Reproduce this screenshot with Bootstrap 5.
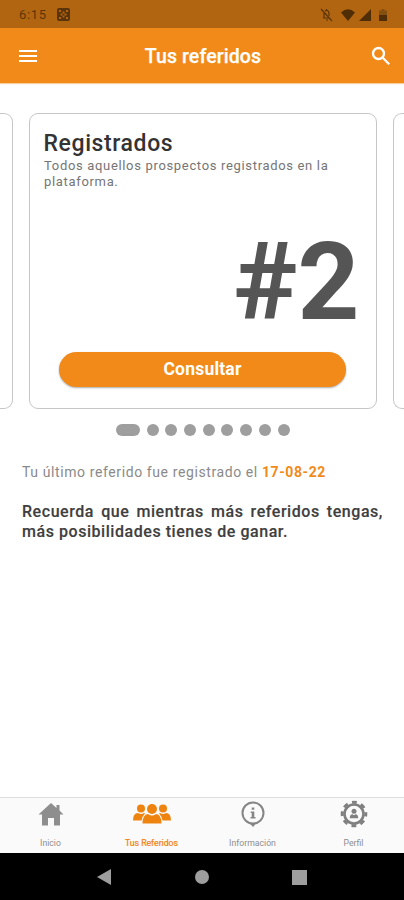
<!DOCTYPE html>
<html lang="es">
<head>
<meta charset="utf-8">
<meta name="viewport" content="width=device-width, initial-scale=1">
<title>Tus referidos</title>
<link href="https://cdn.jsdelivr.net/npm/bootstrap@5.3.0/dist/css/bootstrap.min.css" rel="stylesheet">
<style>
body{font-family:Roboto,"Liberation Sans",sans-serif;background:#fff;color:#3c3c3c;width:404px;height:900px}
svg{display:block;flex:none}
.status{height:28px;background:#b26510;color:#5b3509;font-size:13px;letter-spacing:.65px;padding:2px 17px 0 19px}
.appbar{height:55px;background:#f28a1a;padding:0 13px 0 19px;box-shadow:0 1px 1px #f9cfa0}
.appbar h1{font-size:19.5px;font-weight:500;-webkit-text-stroke:.25px #fff;letter-spacing:.1px;padding:3px 2px 0 0}
.slides{gap:16px;margin-top:30px;margin-left:-.5px}
.slide{flex:none;width:348px;height:296px;border:1.5px solid #c6c6c6;border-radius:9px}
.slide.prev{width:13px;border-left:0;border-radius:0 9px 9px 0}
.slide.next{width:12px;border-right:0;border-radius:9px 0 0 9px}
.slide-body{padding:17px 14px 21px}
.slide h2{font-size:23px;line-height:26px;font-weight:500;color:#333;letter-spacing:.6px}
.desc{font-size:13px;line-height:16px;color:#757575;letter-spacing:.67px;white-space:nowrap;padding:1px 0 0 .5px}
.rank{font-size:108px;line-height:108px;font-weight:700;color:#555;margin:38px 2px 0 0}
.cta{height:35px;width:287px;background:#f28a1a;color:#fff;font-size:17.5px;font-weight:700;line-height:35px;letter-spacing:.2px;box-shadow:0 1px 2px #0005}
.dots{gap:6.7px;margin:15px 0 0 116px;height:12px}
.dots span{width:12px;height:12px;border-radius:6px;background:#9e9e9e;flex:none}
.dots .on{width:24px}
.info{padding:0 21px 0 22px}
.last{font-size:14px;line-height:20px;color:#8a8a8a;letter-spacing:.6px;margin-top:26px}
.last b{color:#f28a1a;font-weight:700}
.note{font-size:16px;line-height:20px;font-weight:500;color:#3f3f3f;margin-top:20px;letter-spacing:.55px;text-align:justify;-webkit-text-stroke:.15px #3f3f3f}
.tabs{height:56px;background:#fafafa;border-top:1px solid #dedede;color:#8e8e8e;font-size:8.7px;line-height:10px}
.tabs .item{width:101px;padding-top:2px}
.tabs .item span{margin-top:10px}
.tabs .on{color:#ee830f}
.tabs .on span{-webkit-text-stroke:.2px #ee830f}
.sys{height:47px;background:#000;padding:1px 97px 0}
</style>
<script src="https://cdn.jsdelivr.net/npm/bootstrap@5.3.0/dist/js/bootstrap.bundle.min.js"></script>
</head>
<body class="d-flex flex-column overflow-hidden">
<div class="status d-flex align-items-center">
  <span>6:15</span>
  <svg class="ms-2" width="16" height="14" viewBox="0 0 16 14"><rect x="2" y="0" width="13" height="13" rx="2" fill="#5b3509"/><path d="M4 2h2v2H4zM11 2h2v2h-2zM7.500 3.500h2v2h-2zM5.500 5.500h2v2h-2zM9.500 5.500h2v2h-2zM7.500 7.500h2v2h-2zM4 9h2v2H4zM11 9h2v2h-2z" fill="#b26510"/></svg>
  <svg class="ms-auto" width="13" height="14" viewBox="0 0 13 14" fill="none" stroke="#5b3509" stroke-width="1.200"><path d="M1 1l11 12M3 10h7M4 10V5M5 3q3-2 4 2v3M6 12h2M6.500 1v2M6 6l3 4"/></svg>
  <svg class="ms-2" width="14" height="12" viewBox="0 0 14 12"><path d="M0 3.500Q7-3 14 3.500L7 12z" fill="#4f2d07"/></svg>
  <svg class="ms-1" width="12" height="12" viewBox="0 0 12 12"><path d="M12 0v12H0z" fill="#4f2d07"/></svg>
  <svg class="ms-2" width="8" height="12" viewBox="0 0 8 12"><path d="M2.500 0h3v1.500H8V7H0V1.500h2.500z" fill="#845010"/><path d="M0 6h8v6H0z" fill="#4f2d07"/></svg>
</div>
<header class="appbar d-flex align-items-center justify-content-between">
  <svg width="18" height="14" viewBox="0 0 18 14"><path d="M0 2h18M0 7h18M0 12h18" stroke="#fff" stroke-width="2.200"/></svg>
  <h1 class="m-0 text-white">Tus referidos</h1>
  <svg width="20" height="20" viewBox="0 0 20 20" fill="none" stroke="#fff" stroke-width="2.300"><circle cx="7.500" cy="7.500" r="5.500"/><path d="M11.500 11.500l6.700 6.700"/></svg>
</header>
<main class="flex-grow-1">
  <div class="slides d-flex overflow-hidden">
    <div class="slide prev"></div>
    <section class="slide slide-body d-flex flex-column">
      <h2 class="m-0">Registrados</h2>
      <p class="desc m-0">Todos aquellos prospectos registrados en la<br>plataforma.</p>
      <div class="rank text-end">#2</div>
      <button class="cta btn rounded-pill border-0 p-0 mt-auto mx-auto">Consultar</button>
    </section>
    <div class="slide next"></div>
  </div>
  <div class="dots d-flex"><span class="on"></span><span></span><span></span><span></span><span></span><span></span><span></span><span></span><span></span></div>
  <div class="info">
    <p class="last mb-0">Tu último referido fue registrado el <b>17-08-22</b></p>
    <p class="note mb-0">Recuerda que mientras más referidos tengas, más posibilidades tienes de ganar.</p>
  </div>
</main>
<nav class="tabs d-flex">
  <div class="item d-flex flex-column align-items-center">
    <svg width="28" height="28" viewBox="0 0 28 28"><path d="M14 3L1.500 14.500H5V25.500h6V18h6v7.500h6v-11h3.500L22.500 10.500V5h-3v3z" fill="#8e8e8e"/></svg>
    <span>Inicio</span>
  </div>
  <div class="item on d-flex flex-column align-items-center">
    <svg width="40" height="28" viewBox="0 0 40 28" fill="#ee830f"><circle cx="9" cy="8.500" r="4"/><circle cx="31" cy="8.500" r="4"/><path d="M1 20.500q0-7.500 5-7.500 3 2 6 0l1 .5q-3 3-3.500 7zM39 20.500q0-7.500-5-7.500-3 2-6 0l-1 .5q3 3 3.500 7z"/><circle cx="20" cy="9" r="5"/><path d="M10.500 23.500q0-9 5.500-9.500 4 3 8 0 5.500.5 5.500 9.500z"/></svg>
    <span>Tus Referidos</span>
  </div>
  <div class="item d-flex flex-column align-items-center">
    <svg width="28" height="28" viewBox="0 0 28 28"><path d="M10.500 23l3.500 4 3.500-4z" fill="#858585"/><circle cx="14" cy="13" r="10.500" fill="none" stroke="#858585" stroke-width="2"/><path d="M12.700 7.500h2.600v2.300h-2.600zM11.700 11.500h3.600v5.500h1.200v1.500h-5V17h1.200v-4h-1z" fill="#858585"/></svg>
    <span>Información</span>
  </div>
  <div class="item d-flex flex-column align-items-center">
    <svg width="28" height="28" viewBox="0 0 28 28" fill="none" stroke="#808080"><circle cx="14" cy="14" r="9.500" stroke-width="2.600"/><circle cx="14" cy="14" r="11.800" stroke-width="3" stroke-dasharray="4.800 4.468" stroke-dashoffset="2.400"/><circle cx="14" cy="11.200" r="2.500" fill="#808080" stroke="none"/><path d="M9.800 18.300q0-4 2.700-4l1.500 1 1.500-1q2.700 0 2.700 4z" fill="#808080" stroke="none"/></svg>
    <span>Perfil</span>
  </div>
</nav>
<div class="sys d-flex align-items-center justify-content-between">
  <svg width="14" height="16" viewBox="0 0 14 16"><path d="M14 0v16L0 8z" fill="#9e9e9e"/></svg>
  <svg width="14" height="14" viewBox="0 0 14 14"><circle cx="7" cy="7" r="7" fill="#9e9e9e"/></svg>
  <svg width="15" height="15" viewBox="0 0 15 15"><path d="M0 0h15v15H0z" fill="#9e9e9e"/></svg>
</div>
</body>
</html>
